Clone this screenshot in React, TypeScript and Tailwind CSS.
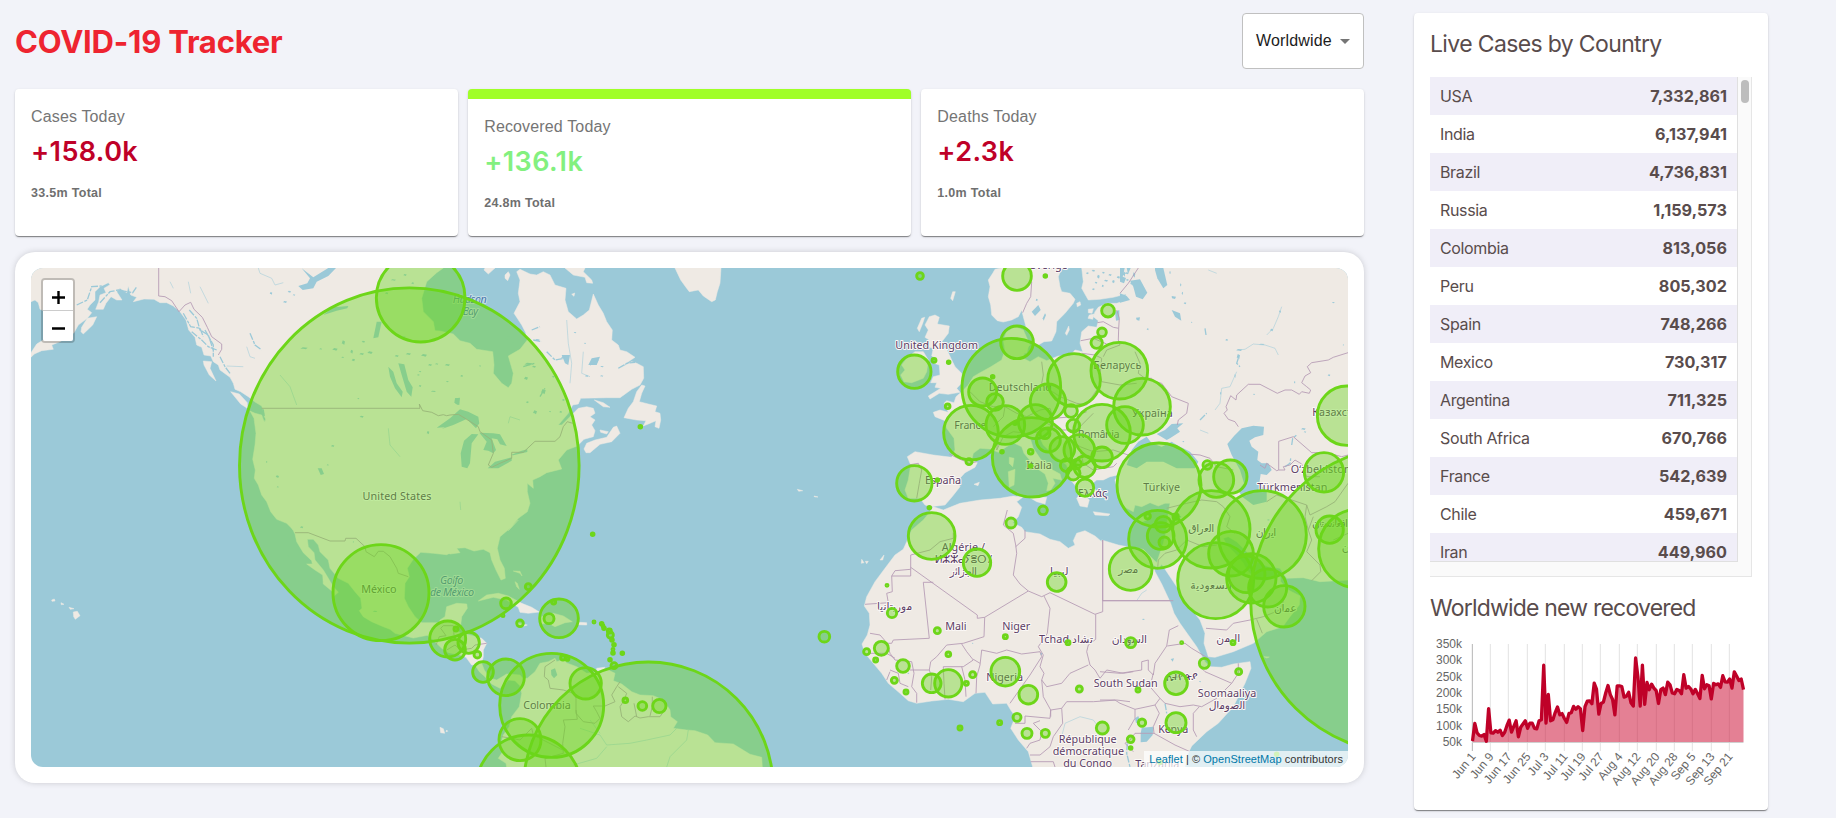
import React from "react";

const countries: [string, string][] = [
  ["USA", "7,332,861"],
  ["India", "6,137,941"],
  ["Brazil", "4,736,831"],
  ["Russia", "1,159,573"],
  ["Colombia", "813,056"],
  ["Peru", "805,302"],
  ["Spain", "748,266"],
  ["Mexico", "730,317"],
  ["Argentina", "711,325"],
  ["South Africa", "670,766"],
  ["France", "542,639"],
  ["Chile", "459,671"],
  ["Iran", "449,960"],
];

/* The map is described in tiles: each has an origin, and local units of a third of a pixel. */
type Tile = [number, number];
const ALASKA: Tile = [0, 250];
const PACIFIC: Tile = [0, 520];
const LABRADOR: Tile = [440, 250];
const CARIBBEAN: Tile = [440, 520];
const EUROPE: Tile = [880, 250];
const STEPPE: Tile = [1120, 250];
const SAHARA: Tile = [840, 510];
const ARABIA: Tile = [1100, 510];

type Part = [Tile, string];
const pts = (...parts: Part[]) =>
  parts
    .map(([[ox, oy], s]) =>
      s
        .trim()
        .split(/\s+/)
        .map((p) => {
          const [x, y] = p.split(",").map(Number);
          return (ox + x / 3).toFixed(1) + "," + (oy + y / 3).toFixed(1);
        })
        .join(" "),
    )
    .join(" ");

const land: string[] = [
  pts(
    [ALASKA, "93,54 93,155 105,150 115,158 120,178 150,190 160,230 130,270 110,282 93,308 93,322 103,312 125,302 160,298 155,285 180,275 222,248 235,225 262,205 275,188 262,178 270,165 285,150 285,125 300,110 325,98 330,104 312,115 318,128 300,135 296,155 287,178 310,178 318,160 333,140 350,150 366,150 350,125 360,115 380,128 385,108 392,135 410,142 400,155 432,147 462,148 480,158 500,158 520,168 540,185 558,210 566,240 585,262 590,285 605,292 612,315 632,318 640,335 655,345 660,360 690,382 700,400 705,418 722,425 745,440 765,456 785,468 793,490 793,517 785,495 765,490 750,483 762,505 768,550 765,585 758,628 766,660 763,685 775,705 785,735 800,755 812,785 830,808 860,820 880,840"],
    [PACIFIC, "875,22 885,42 890,65 910,98 935,122 937,132 920,132 945,150 968,165 970,192 998,215 1002,228 1015,217 1000,200 985,175 970,150 945,120 942,98 925,80 922,58 940,58 955,75 960,95 985,120 990,145 1015,175 1045,190 1065,215 1082,235 1086,265 1078,272 1090,290 1115,305 1150,320 1170,328 1185,340 1240,354 1282,346 1300,360 1325,385 1345,398 1365,402"],
    [CARIBBEAN, "60,405 78,412 95,435 105,435 118,455 135,470 155,492 165,497 180,505 195,492 205,480 225,482 240,497 245,520 238,560 215,590 208,620 190,645 180,680 188,695 175,715 198,730 200,741 967,741 965,712 930,703 880,672 825,668 803,645 765,632 740,630 700,625 712,605 692,590 690,570 670,540 640,527 600,525 575,515 545,492 520,482 525,460 500,448 480,455 440,460 410,440 378,428 380,415 350,425 345,415 325,425 300,430 285,455 262,475 248,475 240,465 200,462 170,480 150,475 133,450 125,430 130,410 130,390 140,370 125,355 90,345 62,340 48,328 62,315 65,290 82,265 80,252 50,250 20,260 15,290 0,300"],
    [PACIFIC, "1318,308 1265,308 1245,290 1225,260 1213,235 1215,190 1228,170 1222,145 1240,118 1262,97 1300,100 1340,104 1358,95"],
    [CARIBBEAN, "20,95 30,102 60,98 50,85 75,83 102,93 130,88 150,98 155,120 168,150 183,180 196,175 193,145 180,120 172,85 180,50 210,25 235,0"],
    [LABRADOR, "205,842 235,805 262,785 270,760 262,725 262,700 280,715 278,690 300,680 320,668 365,657 355,630 380,600 412,588 432,568 460,560 465,542 455,525 465,510 450,500 465,490 460,475 440,470 415,475 395,495 365,525 355,525 385,490 398,465 415,462 422,445 500,443 540,443 575,418 600,405 611,385 610,350 590,340 575,335 535,357 565,335 585,322 560,305 540,300 535,285 515,270 517,240 500,215 490,190 475,165 460,132 448,180 430,195 410,207 385,185 375,150 378,115 345,105 330,75 310,65 290,75 270,72 240,58 230,65 240,90 235,130 240,155 222,190 245,225 257,248 262,270 240,298 205,318 220,370 215,400 205,413 185,400 160,370 162,345 158,305 110,298 90,280 60,272 40,252 0,243"],
    [ALASKA, "1305,242 1300,215 1270,185 1265,145 1280,95 1310,68 1330,54"],
  ),
  pts([LABRADOR, "552,503 565,475 580,455 590,425 605,405 615,408 605,430 598,455 625,462 650,468 645,485 660,490 662,510 657,535 645,530 648,512 625,522 610,528 618,512 590,510"]),
  pts([LABRADOR, "432,597 440,580 465,570 500,562 520,532 530,528 540,550 515,575 480,583 450,608 438,608"]),
  pts([LABRADOR, "480,540 505,545 500,552 482,547"]),
  pts([LABRADOR, "463,450 490,458 510,472 490,470"]),
  pts([LABRADOR, "705,54 715,75 722,90 735,108 748,125 775,120 790,138 815,155 826,150 832,125 840,100 843,54"]),
  pts([LABRADOR, "375,54 400,75 435,82 440,98 458,100 455,90 430,65 435,54"]),
  pts([LABRADOR, "132,60 145,72 165,54 135,54"]),
  pts([LABRADOR, "195,75 205,65 210,75 203,92 195,85"]),
  pts([LABRADOR, "395,133 404,129 402,139"]),
  pts([ALASKA, "692,425 718,432 742,458 742,475 722,462"]),
  pts([ALASKA, "610,333 635,335 630,355 648,393 628,375 612,345"]),
  pts([ALASKA, "245,232 262,205 290,200 278,225 250,252 243,245"]),
  pts([CARIBBEAN, "115,243 140,225 175,220 205,228 245,250 275,262 298,276 265,280 240,277 235,262 200,240 160,232"]),
  pts([CARIBBEAN, "305,290 340,280 370,288 397,305 375,308 345,320 325,310 300,312"]),
  pts([CARIBBEAN, "416,307 440,308 440,315 416,314"]),
  pts([CARIBBEAN, "228,308 262,315 245,320 228,315"]),
  pts([CARIBBEAN, "470,445 495,442 490,450 470,452"]),
  pts([CARIBBEAN, "225,185 232,190 238,208 230,200"]),
  pts([CARIBBEAN, "220,153 240,154 246,168 240,160"]),
  pts([PACIFIC, "220,276 232,274 240,287 226,298 221,290"]),
  pts([PACIFIC, "155,240 163,237 165,243 156,244"]),
  pts([PACIFIC, "183,248 192,253 184,254"]),
  pts([PACIFIC, "207,262 222,266 211,268"]),
  pts([PACIFIC, "1320,622 1330,626 1334,640 1322,638"]),
  pts([PACIFIC, "1340,630 1343,634 1338,635"]),
  /* British Isles */
  pts([EUROPE, "148,200 165,195 178,202 172,222 208,228 205,250 182,280 180,290 200,298 215,330 225,350 245,370 246,398 230,415 240,427 205,433 178,430 150,447 145,438 182,415 165,412 170,398 152,398 160,380 180,375 178,345 162,340 168,325 155,318 160,295 142,290 148,270 135,262 145,240 135,225"]),
  pts([EUROPE, "80,325 105,305 130,305 145,330 140,365 130,385 95,398 72,395 62,375 75,360 65,345"]),
  pts([EUROPE, "112,235 125,205 134,202 128,220 118,245"]),
  pts([EUROPE, "212,145 218,125 226,125 218,152"]),
  /* Scandinavia */
  pts([EUROPE, "365,54 345,58 338,70 325,90 330,110 325,140 332,165 335,195 352,212 370,216 395,210 415,200 425,180 430,200 438,230 455,262 460,282 475,285 492,275 515,273 528,245 530,215 555,190 580,160 585,148 570,130 545,125 540,110 535,80 545,54"]),
  /* Europe, Asia and Africa in one coastline */
  pts(
    [EUROPE, "605,54 610,95 605,115 625,150 660,148 700,142 738,132 735,152 710,160 680,160 655,172 645,185 640,200 655,212 650,232 625,228 605,245 600,280 608,305 585,300 570,318 535,318 500,332 475,320 450,335 430,325 435,300 450,285 430,240 405,230 380,245 370,270 375,300 365,330 330,352 300,368 280,380 265,405 245,425 228,440 222,458 200,452 192,460 205,487 180,480 160,487 165,500 195,512 200,535 222,565 225,600 215,622 160,615 105,605 82,620 92,645 85,690 75,720 85,745 120,745 135,765 152,770 195,765 215,742 240,710 235,690 255,668 285,652 292,638 275,630 280,610 300,595 330,597 355,607 380,590 400,578 425,590 432,610 470,655 495,672 505,700 500,722 512,720 525,700 518,685 545,690 540,672 500,650 480,625 460,595 452,570 475,553 490,585 525,618 560,645 572,690 590,712 598,735 590,745 600,768 622,772 628,750 615,735 645,735 655,728 632,705 650,690 670,690 690,680 715,675 705,690 712,720 720,755 735,772 760,785"],
    [STEPPE, "45,765 65,770 90,758 115,768 135,760 150,760 145,790 140,830"],
    [ARABIA, "200,60 190,100 170,158 130,118 90,112 55,105 5,90"],
    [SAHARA, "785,95 765,78 735,62 710,70 700,92 705,105 685,115 660,95 630,88 600,72 555,65 545,52 518,38 535,20 545,-8 530,-25 548,-38 520,-42 480,-35 420,-30 360,-20 310,0 280,-10 268,8 250,30 215,60 200,95 190,118 165,135 135,175 105,215 80,260 73,288 88,310 90,345 82,375 66,402 75,430 100,460 125,490 145,520 180,550 205,572 230,580 275,573 325,568 370,575 405,550 435,547 458,582 500,580 512,600 526,620 512,655 535,690 565,725 578,771"],
    [ARABIA, "255,771 262,735 275,708 320,665 355,640 400,590 435,520 453,475 450,455 400,462 365,472 330,470 315,455 290,410 265,375 240,340 222,310 212,280 185,222 165,185 158,162 175,178 185,163 200,185 230,230 262,282 300,330 315,370 312,400 325,440 345,442 400,425 460,400 500,365 548,350 570,320 598,285 600,258 565,240 542,215 540,195 520,200 495,215 475,205 455,195 440,180 430,160 405,130 380,105 370,85 385,80 410,95 440,125 470,155 505,170 540,175 560,205 610,203 660,215 744,210"],
    [STEPPE, "684,54"],
  ),
  pts([EUROPE, "388,622 402,625 398,650 388,640"]),
  pts([EUROPE, "385,665 405,658 402,705 388,712"]),
  pts([EUROPE, "445,740 500,742 495,762 470,755"]),
  pts([EUROPE, "640,785 690,792 685,797 645,795"]),
  pts([EUROPE, "282,703 298,697 294,707"]),
  pts([EUROPE, "425,295 445,290 440,310 425,308"]),
  pts([EUROPE, "590,160 600,155 602,165 592,170"]),
  pts([EUROPE, "625,178 640,176 636,190 625,188"]),
  pts([EUROPE, "628,195 642,192 638,208 624,205"]),
  pts([EUROPE, "556,250 566,228 568,240 560,256"]),
  pts([ARABIA, "110,25 150,15 140,30 120,38"]),
  pts([CARIBBEAN, "1265,118 1272,128 1264,130"]),
  pts([CARIBBEAN, "1276,124 1285,124 1280,131"]),
  pts([CARIBBEAN, "1320,120 1332,105 1328,120"]),
  pts([ARABIA, "492,440 508,441 500,444"]),
  pts([LABRADOR, "1072,718 1088,722 1076,724"]),
  pts([LABRADOR, "1122,738 1134,741 1124,741"]),
];

const water: string[] = [
  pts([ALASKA, "895,108 922,100 930,85 905,55 940,82 985,54 1008,54 985,78 950,95 940,115 908,120"]),
  pts([ALASKA, "970,195 1000,172 1045,168 1042,175 1010,182"]),
  pts([ALASKA, "1195,340 1213,343 1225,390 1238,412 1234,440 1220,425 1205,375"]),
  pts([ALASKA, "1165,350 1180,365 1190,400 1208,425 1205,442 1185,415 1170,380"]),
  pts([ALASKA, "1130,215 1145,215 1135,262 1120,265"]),
  pts([ALASKA, "953,655 965,655 972,672 962,675"]),
  pts([ALASKA, "1365,445 1378,445 1375,465 1363,458"]),
  pts([ALASKA, "1310,533 1350,505 1375,498"], [LABRADOR, "30,505 60,478 85,485 115,500 118,520 108,535 80,507 40,525 5,537"], [ALASKA, "1335,532"]),
  pts([LABRADOR, "95,552 115,553 95,580 90,640 82,655 65,650 62,610 72,572"]),
  pts([LABRADOR, "118,548 160,550 180,553 200,588 180,583 172,568 155,565 168,600 160,610 145,602 130,600 140,575"]),
  pts([LABRADOR, "143,655 165,635 215,622 215,632 175,655"]),
  pts([LABRADOR, "212,615 245,602 262,598 262,606 220,616"]),
  pts([LABRADOR, "445,345 455,325 480,320 470,345"]),
  pts([LABRADOR, "365,315 390,315 385,345 375,340"]),
  pts([LABRADOR, "45,445 60,443 58,465 47,462"]),
  pts([CARIBBEAN, "333,450 345,445 352,465 342,475 334,465"]),
  pts([EUROPE, "455,185 475,165 482,180 465,198"]),
  pts([EUROPE, "488,205 495,190 498,195 491,212"]),
  /* Black Sea and Azov */
  pts([EUROPE, "740,645 755,600 775,575 800,560 815,580 845,590 875,575 890,585 930,605 955,635 945,655 890,655 850,635 800,635 770,655"]),
  pts([STEPPE, "110,552 135,540 155,522 190,520 172,535 180,545 150,565 140,570"]),
  pts([STEPPE, "342,558 365,535 400,527 432,530 430,555 405,562 388,572 395,590 415,605 412,630 425,640 445,640 455,660 440,675 422,672 418,700 440,725 440,755 400,765 368,742 355,722 372,700 360,660 335,615 322,582"]),
  pts([STEPPE, "30,92 60,88 82,128 68,148 48,140 40,110"]),
  pts([STEPPE, "105,60 112,85 130,115 142,105 130,54 105,54"]),
  pts([STEPPE, "155,180 180,190 184,212 165,200"]),
  pts([STEPPE, "0,54 14,54 8,80 18,84 12,100 0,95"]),
  pts([STEPPE, "20,54 32,54 24,72"]),
  pts([STEPPE, "0,130 20,138 30,150 0,158"]),
  pts([STEPPE, "155,138 168,140 165,147 156,145"]),
  pts([STEPPE, "48,203 60,202 58,212 50,210"]),
  pts([ARABIA, "125,653 160,650 158,675 140,695 122,697 122,670"]),
  pts([ARABIA, "105,625 115,618 120,632 108,640"]),
  pts([ARABIA, "212,447 222,445 218,455"]),
  pts([EUROPE, "705,185 718,180 718,210 708,212"]),
];

/* Small lakes: tile, then x, y, half width, half height */
const lakes: [Tile, number[][]][] = [
  [ALASKA, [
    [813, 130, 4, 4], [855, 156, 6, 3], [868, 125, 5, 3], [882, 135, 4, 2], [912, 295, 11, 3], [962, 297, 4, 2],
    [1005, 298, 8, 4], [1030, 278, 5, 7], [1055, 305, 4, 6], [1060, 330, 5, 4], [1085, 312, 7, 3], [1110, 308, 8, 4],
    [1090, 275, 5, 3], [1028, 322, 4, 2], [1210, 262, 7, 3], [1225, 312, 8, 3], [1272, 316, 9, 4], [1190, 318, 6, 3],
    [1290, 345, 6, 3], [1310, 342, 5, 2], [1260, 365, 4, 2], [1255, 375, 4, 2], [1075, 446, 3, 2], [1300, 424, 8, 2],
    [1260, 408, 4, 3], [1342, 395, 4, 2], [1085, 500, 6, 3], [1284, 548, 4, 5], [998, 588, 5, 3], [983, 645, 3, 2],
    [832, 680, 5, 4], [833, 711, 3, 2], [800, 636, 2, 3], [1180, 90, 8, 2], [1215, 75, 5, 3], [1238, 100, 4, 3],
    [1160, 130, 5, 3],
  ]],
  [PACIFIC, [[905, 22, 5, 3], [1125, 274, 7, 2], [865, 108, 2, 2], [1060, 66, 2, 2]]],
  [LABRADOR, [
    [205, 265, 9, 7], [215, 280, 5, 5], [265, 342, 12, 4], [282, 350, 6, 3], [258, 385, 6, 5], [310, 425, 7, 8],
    [285, 487, 6, 6], [262, 457, 4, 3], [330, 485, 3, 2], [362, 486, 4, 3], [370, 450, 4, 3], [340, 380, 4, 3],
    [22, 345, 8, 3], [65, 378, 4, 3], [120, 348, 3, 2], [292, 270, 7, 3], [372, 322, 9, 4], [463, 338, 10, 6],
    [440, 378, 5, 3], [485, 378, 5, 2], [486, 350, 5, 2], [405, 248, 4, 2], [435, 280, 3, 2],
  ]],
  [STEPPE, [
    [150, 68, 2, 5], [182, 105, 2, 5], [187, 130, 2, 5], [195, 160, 4, 3], [83, 238, 3, 3], [215, 217, 2, 2],
    [320, 270, 4, 3], [355, 320, 5, 8], [358, 300, 9, 3], [402, 433, 3, 2], [627, 376, 4, 3], [670, 285, 2, 2],
    [640, 158, 4, 2], [425, 283, 9, 2], [480, 185, 3, 4], [455, 240, 5, 4], [550, 537, 7, 3], [555, 546, 4, 2],
    [524, 397, 2, 4], [302, 430, 2, 5], [345, 378, 2, 6], [190, 575, 3, 2], [12, 72, 4, 8], [22, 90, 4, 3],
  ]],
  [EUROPE, [
    [622, 70, 4, 3], [640, 62, 5, 3], [655, 80, 4, 6], [670, 68, 4, 3], [690, 75, 5, 3], [678, 92, 6, 3],
    [648, 98, 4, 3], [700, 95, 4, 5], [640, 118, 4, 3], [668, 108, 3, 4], [715, 82, 5, 4], [740, 70, 6, 3],
    [755, 100, 4, 6], [470, 150, 3, 4], [380, 110, 2, 3], [762, 75, 4, 8],
  ]],
  [SAHARA, [[604, 432, 3, 4], [398, 400, 2, 2], [205, 490, 3, 2]]],
  [ARABIA, [[130, 328, 4, 2], [300, 515, 3, 2], [240, 20, 4, 3], [505, 30, 4, 2]]],
];

const rivers: string[] = [
  pts([ALASKA, "230,165 262,150 275,110 305,108"]),
  pts([ALASKA, "300,158 330,125 355,120 398,128 410,110"]),
  pts([ALASKA, "568,180 590,205 600,240 625,255 640,300"]),
  pts([ALASKA, "550,190 572,230 600,235 610,260"]),
  pts([ALASKA, "615,240 640,285 640,320"]),
  pts([ALASKA, "575,245 605,270 625,290 650,300"]),
  pts([ALASKA, "660,320 675,350 690,370"]),
  pts([ALASKA, "750,250 765,285 785,300"]),
  pts([ALASKA, "755,460 790,480 795,515"]),
  pts([LABRADOR, "320,305 345,330 375,325"]),
  pts([LABRADOR, "535,355 560,340 585,337"]),
  pts([LABRADOR, "450,345 475,330"]),
  pts([LABRADOR, "275,240 300,230"]),
  pts([LABRADOR, "280,270 305,275"]),
  pts([LABRADOR, "300,440 315,415"]),
  pts([LABRADOR, "250,350 285,340"]),
  pts([STEPPE, "355,325 350,340 360,350"]),
  pts([STEPPE, "240,510 260,490"]),
  pts([STEPPE, "515,585 518,565 530,555"]),
  pts([STEPPE, "255,235 258,255"]),
  pts([STEPPE, "495,650 510,640 512,625"]),
  pts([ARABIA, "195,580 200,610"]),
  pts([ARABIA, "82,700 80,730 90,771"]),
];

const streams: string[] = [
  pts([ALASKA, "775,54 780,70 815,85 825,105 850,98"]),
  pts([ALASKA, "1165,535 1170,585 1200,620"]),
  pts([ALASKA, "840,375 870,410 890,465"]),
  pts([ALASKA, "510,95 520,115"]),
  pts([ALASKA, "565,95 572,130"]),
  pts([ALASKA, "600,110 625,160"]),
  pts([ALASKA, "680,348 730,350"]),
  pts([ALASKA, "740,290 750,320 765,325"]),
  pts([LABRADOR, "380,210 385,280 395,340 390,400"]),
  pts([LABRADOR, "430,305 425,370 450,380"]),
  pts([LABRADOR, "205,520 210,500 240,510"]),
  pts([LABRADOR, "60,755 62,780"]),
  pts([CARIBBEAN, "420,625 480,645 500,675 570,670 620,660 690,645 710,625"]),
  pts([CARIBBEAN, "400,735 470,715 500,680"]),
  pts([CARIBBEAN, "680,741 690,710 740,660 745,630"]),
  pts([CARIBBEAN, "450,600 480,640"]),
  pts([STEPPE, "485,170 475,200 460,235 440,255"]),
  pts([STEPPE, "475,315 465,295 435,285 400,282 375,298 350,300"]),
  pts([STEPPE, "350,365 330,410 305,415 300,460 285,480"]),
  pts([STEPPE, "265,60 290,70"]),
  pts([STEPPE, "240,540 265,550"]),
  pts([ARABIA, "110,272 125,250 140,240"]),
  pts([SAHARA, "665,680 675,640 720,620 760,630 775,650"]),
];

const borders: string[] = [
  pts([ALASKA, "476,54 476,138 495,140 515,152 537,185 555,165 572,157 582,178 607,202 622,232 635,260 665,282 665,298 655,315"]),
  pts([ALASKA, "785,475 1260,475 1258,462 1268,482 1295,487 1315,497"], [LABRADOR, "10,494 20,497 30,495 55,493 75,505 115,530 120,545 155,570 160,610 145,645 155,652 180,640 215,625 215,607 250,607 285,574 345,574 360,560 370,530 382,515 398,520"]),
  pts([PACIFIC, "885,38 925,38 990,63 1035,63 1037,55 1068,55 1095,80 1098,95 1123,110 1135,94 1150,94 1170,110 1190,145 1195,160 1225,170"]),
  pts([PACIFIC, "1308,375 1318,350 1338,347 1322,325 1330,317 1360,317 1362,345"]),
  pts([CARIBBEAN, "20,390 45,375 62,390 95,385 105,375 140,370"]),
  pts([CARIBBEAN, "345,420 315,440 313,470 325,480 330,505 370,510 400,520 408,535 408,580 430,605 465,610 480,595 470,575 460,558 495,558 525,545 515,525 530,500 540,485"]),
  pts([CARIBBEAN, "535,500 560,520 550,545 540,560 545,590 565,605 585,588 600,594 625,590 660,590 670,575"]),
  pts([CARIBBEAN, "582,550 590,590"]),
  pts([CARIBBEAN, "637,530 637,560 630,588"]),
  pts([CARIBBEAN, "408,570 412,598 370,600 375,620 368,670 370,700 315,715 318,741"]),
  pts([CARIBBEAN, "185,650 215,655 240,660 275,625 280,645 368,690"]),
  /* Europe */
  pts([EUROPE, "455,95 452,140 440,160 428,188"]),
  pts([EUROPE, "775,54 745,100 720,130"]),
  pts([EUROPE, "652,218 670,215 700,232 716,235 718,205 710,180"]),
  pts([EUROPE, "716,235 715,270 720,285 680,300 670,320"]),
  pts([EUROPE, "602,272 640,265 680,282"]),
  pts([EUROPE, "605,310 645,315 665,325 660,370 665,395"]),
  pts([EUROPE, "485,335 490,375 485,400 510,420"]),
  pts([EUROPE, "665,395 720,405 770,400"]),
  pts([EUROPE, "510,420 540,440 590,460 620,465 650,420"]),
  pts([EUROPE, "270,425 300,455 340,470 375,470"]),
  pts([EUROPE, "340,530 370,500 375,470 410,490 440,500 480,480 510,475"]),
  pts([EUROPE, "355,560 350,600 370,560 400,545 440,550 480,545"]),
  pts([EUROPE, "510,475 520,505 580,500 620,485"]),
  pts([EUROPE, "500,520 540,540 590,540 640,490"]),
  pts([EUROPE, "560,560 600,590 640,605 700,600 745,615"]),
  pts([EUROPE, "600,600 610,640 640,660 700,650 710,640"]),
  pts([EUROPE, "208,612 240,628 270,640 290,635"]),
  pts([EUROPE, "115,640 125,660 118,700 110,745"]),
  pts([EUROPE, "85,645 115,640"]),
  pts([STEPPE, "45,305 60,340 55,370 75,385 95,385 105,395 125,400 155,440 180,450 205,460 200,490 175,510 172,525"]),
  pts([STEPPE, "684,308 640,322 625,330 575,338 562,350 572,368 555,378 545,398 560,410 572,420 568,430 545,425 538,433 515,420 495,420 472,430 420,403 385,403 350,435 348,450 332,437 318,470 322,480 312,490 325,508 345,515 355,530"]),
  pts([STEPPE, "476,574 476,660 495,660 490,650 510,645 525,630 545,642 560,680 600,680"]),
  pts([STEPPE, "476,574 520,560 575,608 620,608 665,620 684,615"]),
  pts([STEPPE, "420,645 435,655 440,640 470,662 476,660"]),
  pts([STEPPE, "440,755 470,735 500,745 560,765 570,795 620,770 645,755 684,700"]),
  pts([STEPPE, "560,765 555,800 565,840"]),
  pts([STEPPE, "205,612 240,615 270,625 290,650 340,660"]),
  pts([STEPPE, "140,775 200,760 245,750 290,755 310,770 330,800 320,830 345,850"]),
  /* Africa */
  pts([SAHARA, "340,68 340,85 300,95 270,120 212,135 212,198 155,198 157,245 140,250 145,278 75,283"]),
  pts([SAHARA, "155,198 165,182 212,178"]),
  pts([SAHARA, "212,172 412,315 412,325 434,322 565,243"]),
  pts([SAHARA, "280,217 250,217 268,385 160,390 155,400 142,400 120,375 90,370"]),
  pts([SAHARA, "434,322 432,380 370,400 320,405 290,440 272,455 268,480"]),
  pts([SAHARA, "502,0 490,45 520,70 527,105 530,130 520,195 540,222 565,243 605,260 630,248 765,313 788,305 788,90"]),
  pts([SAHARA, "788,272 1000,272"]),
  pts([SAHARA, "555,60 555,85 527,110"]),
  pts([SAHARA, "767,313 767,388 745,405 740,425 750,465 765,480 780,505 800,480 850,490 880,485"]),
  pts([SAHARA, "612,258 630,295 622,370 595,410 610,435 600,470 612,490 605,510 620,530 665,520 690,490 745,465"]),
  pts([SAHARA, "425,420 470,430 500,420 545,432 600,425 605,440"]),
  pts([SAHARA, "425,420 420,465 410,500 408,550"]),
  pts([SAHARA, "605,440 570,495 545,530 510,580"]),
  pts([SAHARA, "365,402 380,425 400,450 370,470 310,470 312,520 315,568"]),
  pts([SAHARA, "400,448 420,460"]),
  pts([SAHARA, "365,470 375,510 378,560"]),
  pts([SAHARA, "210,480 268,480 275,500 272,540"]),
  pts([SAHARA, "142,400 150,430 165,450 215,455 222,490 215,530 230,550 230,578"]),
  pts([SAHARA, "85,430 140,430 165,445"]),
  pts([SAHARA, "150,480 175,490 180,520 205,530"]),
  pts([SAHARA, "140,510 150,485"]),
  pts([SAHARA, "605,510 610,560 632,600 630,625 555,618 555,640 525,640"]),
  pts([SAHARA, "632,620 632,600 665,595 680,575 760,575 830,570 870,575"]),
  pts([SAHARA, "665,595 668,640 640,680 630,710 600,735 570,735"]),
  pts([SAHARA, "600,632 580,640 605,665 600,690 570,700 560,715"]),
  pts([SAHARA, "572,755 640,755 645,771"]),
  pts([ARABIA, "8,90 8,272 210,272"]),
  pts([ARABIA, "235,347 208,360 200,408 165,460 160,495 145,480 145,450 125,455 125,480 60,490 0,485"]),
  pts([ARABIA, "202,408 255,400 275,415 300,430 325,445"]),
  pts([ARABIA, "160,490 150,530 180,565 195,580 240,590 280,585 305,590 350,565 395,520 315,485 300,470"]),
  pts([ARABIA, "0,570 45,570 60,580 105,598 165,585 180,565"]),
  pts([ARABIA, "165,585 178,610 160,650 162,670 105,670 90,690 75,700 100,725"]),
  pts([ARABIA, "162,670 225,705 270,725"]),
  pts([ARABIA, "298,590 280,610 280,660 290,680"]),
  pts([ARABIA, "105,598 105,625 85,660"]),
  pts([ARABIA, "415,460 415,490 395,520"]),
  pts([ARABIA, "318,355 380,360 400,340 450,330 490,320 540,300 555,260"]),
  pts([ARABIA, "470,328 487,370"]),
  pts([ARABIA, "173,175 175,150 195,130 230,120 260,90 310,110 350,105"]),
  pts([ARABIA, "620,125 635,90 625,60 640,20"]),
  pts([ARABIA, "620,125 660,165 662,185 635,212"]),
  pts([ARABIA, "700,90 744,70"]),
];

type Dot = [number, number, number];
const dots: [Tile, Dot[]][] = [
  [ALASKA, [[1262, 143, 133]]],
  [PACIFIC, [[1143, 218, 144], [1343, 357, 54]]],
  [LABRADOR, [[601, 530, 4]]],
  [CARIBBEAN, [
    [335, 556, 156], [625, 800, 374], [266, 801, 156], [240, 659, 63], [45, 389, 31], [86, 368, 32], [48, 327, 6],
    [112, 404, 10], [129, 456, 31], [198, 472, 55], [437, 490, 47], [522, 437, 9], [556, 541, 7], [607, 558, 13],
    [658, 558, 20], [327, 296, 15], [357, 295, 58], [341, 246, 6], [198, 250, 16], [265, 200, 9], [189, 287, 3],
    [240, 310, 10], [458, 43, 4], [462, 306, 3], [485, 311, 4], [489, 318, 3], [492, 325, 4], [508, 333, 6],
    [511, 345, 9], [516, 360, 4], [522, 374, 4], [519, 388, 3], [519, 399, 4], [547, 400, 4], [510, 419, 4],
    [369, 413, 7], [382, 416, 5], [1153, 350, 16],
  ]],
  [SAHARA, [
    [275, 78, 70], [411, 158, 41], [513, 39, 15], [650, 216, 28], [156, 309, 14], [141, 226, 3], [292, 362, 9],
    [124, 415, 21], [80, 425, 9], [107, 450, 6], [189, 468, 19], [163, 511, 9], [198, 546, 6], [275, 520, 28],
    [325, 520, 41], [379, 520, 6], [398, 494, 9], [325, 433, 7], [496, 485, 43], [496, 380, 6], [565, 554, 28],
    [684, 398, 6], [718, 537, 9], [787, 654, 18], [531, 622, 12], [561, 670, 15], [616, 670, 12], [479, 638, 6],
    [360, 654, 6],
  ]],
  [ARABIA, [
    [92, 177, 64], [92, 398, 15], [245, 398, 3], [313, 460, 15], [416, 485, 9], [228, 520, 34], [228, 638, 30],
    [114, 540, 6], [126, 638, 11], [92, 688, 10], [92, 714, 4], [399, 398, 6], [180, 757, 4], [530, 733, 4],
    [173, 88, 87], [182, 78, 40], [193, 97, 16], [190, 43, 24], [143, 19, 8], [227, 20, 8], [347, 212, 114],
    [334, 58, 116], [487, 74, 132], [393, 131, 67], [454, 205, 74], [440, 193, 55], [503, 234, 57], [553, 289, 62],
    [774, 116, 118], [689, 59, 41], [913, 269, 461],
  ]],
  [STEPPE, [[331, 680, 50], [289, 690, 52], [262, 645, 13], [117, 705, 126], [681, 497, 89], [612, 667, 59], [66, 470, 85]]],
  [EUROPE, [
    [735, 525, 55], [718, 362, 85], [684, 182, 19], [666, 247, 13], [650, 278, 17], [582, 390, 79], [394, 413, 148],
    [411, 277, 49], [411, 78, 43], [496, 78, 4], [338, 380, 4], [308, 426, 42], [345, 456, 25], [273, 548, 82],
    [366, 605, 4], [376, 525, 58], [405, 520, 4], [466, 515, 51], [504, 455, 53], [573, 483, 19], [580, 527, 19],
    [456, 622, 119], [452, 605, 7], [452, 648, 4], [495, 551, 15], [505, 570, 36], [547, 597, 37], [598, 600, 46],
    [666, 548, 85], [666, 622, 31], [560, 646, 19], [580, 670, 20], [614, 650, 32], [590, 642, 14], [615, 713, 26],
    [103, 700, 53], [172, 690, 4], [148, 773, 4], [267, 635, 9], [103, 365, 50], [162, 331, 6], [206, 337, 4],
    [203, 469, 7], [120, 78, 10], [489, 781, 13],
  ]],
];

/* tile, centre x, baseline y, text, drawn width */
const labels: [Tile, number, number, string, number][] = [
  [ALASKA, 1191, 749, "United States", 207],
  [PACIFIC, 1137, 218, "México", 106],
  [CARIBBEAN, 321, 566, "Colombia", 143],
  [EUROPE, 170, 297, "United Kingdom", 248],
  [EUROPE, 507, 58, "Sverige", 112],
  [EUROPE, 421, 424, "Deutschland", 190],
  [EUROPE, 271, 536, "France", 96],
  [EUROPE, 477, 657, "Italia", 77],
  [EUROPE, 189, 701, "España", 108],
  [EUROPE, 638, 740, "Ελλάς", 88],
  [EUROPE, 656, 563, "România", 126],
  [EUROPE, 712, 356, "Беларусь", 144],
  [STEPPE, 97, 501, "Україна", 122],
  [STEPPE, 656, 497, "Казахстан", 158],
  [STEPPE, 602, 668, "Oʻzbekiston", 180],
  [STEPPE, 517, 722, "Türkmenistan", 210],
  [STEPPE, 125, 722, "Türkiye", 111],
  [SAHARA, 370, 124, "Algérie /", 130],
  [SAHARA, 370, 160, "ⵍⵣⵣⴰⵢⴻⵔ /", 172],
  [SAHARA, 370, 196, "الجزائر", 82],
  [SAHARA, 658, 194, "ليبيا", 56],
  [SAHARA, 164, 299, "موريتانيا", 106],
  [SAHARA, 348, 360, "Mali", 64],
  [SAHARA, 529, 361, "Niger", 84],
  [SAHARA, 678, 398, "Tchad تشاد", 162],
  [SAHARA, 494, 514, "Nigeria", 110],
  [SAHARA, 743, 699, "République", 174],
  [SAHARA, 745, 735, "démocratique", 214],
  [SAHARA, 743, 770, "du Congo", 146],
  [ARABIA, 77, 532, "South Sudan", 192],
  [ARABIA, 88, 399, "السودان", 106],
  [ARABIA, 85, 188, "مصر", 60],
  [ARABIA, 304, 66, "العراق", 78],
  [ARABIA, 498, 78, "ایران", 62],
  [ARABIA, 333, 238, "السعودية", 124],
  [ARABIA, 385, 397, "اليمن", 72],
  [ARABIA, 556, 305, "عمان", 68],
  [ARABIA, 690, 52, "افغانستان", 108],
  [ARABIA, 760, 122, "پاکستان", 70],
  [ARABIA, 245, 511, "ኢትዮጵያ", 96],
  [ARABIA, 381, 560, "Soomaaliya", 176],
  [ARABIA, 381, 597, "الصومال", 110],
  [ARABIA, 220, 668, "Kenya", 90],
  [ARABIA, 172, 775, "Tanzania", 132],
];
const seaLabels: [Tile, number, number, string, number][] = [
  [LABRADOR, 89, 159, "Hudson", 102],
  [LABRADOR, 91, 196, "Bay", 46],
  [CARIBBEAN, 35, 191, "Golfo", 70],
  [CARIBBEAN, 36, 227, "de México", 132],
];

function WorldMap() {
  return (
    <svg viewBox="31 268 1317 499" className="block h-full w-full" fontFamily="'Noto Sans','Open Sans','DejaVu Sans',sans-serif">
      <rect x="31" y="268" width="1317" height="499" fill="#9bc9d8" />
      {land.map((p, i) => (
        <polygon key={i} points={p} fill="#efeae4" stroke="#efeae4" strokeWidth=".5" strokeLinejoin="round" />
      ))}
      {water.map((p, i) => (
        <polygon key={i} points={p} fill="#9bc9d8" />
      ))}
      {lakes.flatMap(([[ox, oy], list], k) =>
        list.map(([x, y, a, b], i) => (
          <polygon
            key={k + "-" + i}
            fill="#9bc9d8"
            points={pts([[ox, oy], `${x - a},${y + b / 3} ${x - a / 3},${y - b} ${x + a},${y - b / 2} ${x + a / 2},${y + b} ${x - a / 4},${y + b / 2}`])}
          />
        )),
      )}
      {rivers.map((p, i) => (
        <polyline key={i} points={p} fill="none" stroke="#9bc9d8" strokeWidth="1.3" strokeDasharray="7 1.5 3 1" />
      ))}
      {streams.map((p, i) => (
        <polyline key={i} points={p} fill="none" stroke="#aacfdb" strokeWidth=".8" opacity=".8" />
      ))}
      {borders.map((p, i) => (
        <polyline key={i} points={p} fill="none" stroke="#b79db5" strokeWidth=".9" strokeLinejoin="round" />
      ))}
      {[...labels, ...seaLabels].map(([[ox, oy], x, y, t, w], i) => {
        const sea = i >= labels.length;
        return (
          <text
            key={i}
            x={ox + x / 3}
            y={oy + y / 3}
            textLength={w / 3}
            lengthAdjust="spacing"
            textAnchor="middle"
            fontSize="10.8"
            fontStyle={sea ? "italic" : "normal"}
            fill={sea ? "#4878ac" : "#5c3e66"}
            stroke={sea ? "#c5dde6" : "#fbf8f6"}
            strokeWidth="2"
            strokeLinejoin="round"
            paintOrder="stroke"
          >
            {t}
          </text>
        );
      })}
      <g fill="#6ad81c" fillOpacity=".4" stroke="#6dd619" strokeWidth="2.9">
        <ellipse cx="409.3" cy="465.5" rx="169.8" ry="177.6" />
        {dots.flatMap(([[ox, oy], list], k) =>
          list.map(([x, y, r], i) => <circle key={k + "-" + i} cx={ox + x / 3} cy={oy + y / 3} r={r / 3} />),
        )}
      </g>
    </svg>
  );
}

/* New recoveries per day, in thousands, from Jun 1 */
const series = [
  53, 107, 78, 70, 68, 73, 52, 152, 78, 77, 85, 80, 86, 70, 80, 100, 117, 80, 98, 115, 66, 95, 105, 115, 92, 108, 108,
  92, 90, 115, 118, 285, 108, 196, 115, 118, 140, 157, 133, 137, 122, 110, 138, 140, 159, 150, 158, 152, 85, 158, 175,
  176, 167, 230, 212, 135, 168, 172, 200, 223, 195, 180, 133, 222, 222, 220, 187, 190, 202, 170, 160, 307, 250, 160, 285,
  165, 232, 210, 227, 215, 207, 168, 210, 215, 195, 233, 225, 200, 198, 211, 208, 198, 256, 215, 220, 213, 198, 211, 198,
  183, 254, 213, 225, 222, 182, 229, 225, 228, 217, 253, 234, 233, 243, 215, 265, 252, 238, 243, 210,
];
const ticks: [string, number][] = [
  ["Jun 1", 217], ["Jun 9", 271], ["Jun 17", 325], ["Jun 25", 382], ["Jul 3", 436], ["Jul 11", 493], ["Jul 19", 547],
  ["Jul 27", 601], ["Aug 4", 658], ["Aug 12", 712], ["Aug 20", 769], ["Aug 28", 823], ["Sep 5", 877], ["Sep 13", 934],
  ["Sep 21", 988],
];

function LineChart() {
  const line = series
    .map((v, i) => (1472.5 + (i * 271) / (series.length - 1)).toFixed(1) + "," + (742 - ((v - 50) * 98) / 300).toFixed(1))
    .join(" ");
  return (
    <svg viewBox="1430 630 321 160" className="block h-[160px] w-[321px]" fontFamily="'Liberation Sans',Arial,sans-serif" fontSize="12" fill="#666">
      {ticks.map(([t, x], i) => (
        <g key={t}>
          <line x1={1400 + x / 3} x2={1400 + x / 3} y1="644" y2="751" stroke={i ? "#e2e2e2" : "#b5b5b5"} strokeWidth="1" />
          <text textAnchor="end" transform={`translate(${1404 + x / 3} 757) rotate(-50)`}>
            {t}
          </text>
        </g>
      ))}
      <line x1="1472" x2="1743.500" y1="742.5" y2="742.5" stroke="#d0d0d0" />
      {["350k", "300k", "250k", "200k", "150k", "100k", "50k"].map((t, i) => (
        <text key={t} x="1462" y={648 + i * 16.33} textAnchor="end">
          {t}
        </text>
      ))}
      <polygon points={`1472.5,742 ${line} 1743.5,742`} fill="#cc1034" fillOpacity=".53" />
      <polyline points={line} fill="none" stroke="#bf0128" strokeWidth="3.3" strokeLinejoin="round" strokeLinecap="butt" />
    </svg>
  );
}

const cardShadow =
  "rounded bg-white shadow-[0px_2px_1px_-1px_rgba(0,0,0,0.28),0px_1px_1px_0px_rgba(0,0,0,0.2),0px_1px_3px_0px_rgba(0,0,0,0.12)]";

function InfoBox({ title, cases, total, active, green }: { title: string; cases: string; total: string; active?: boolean; green?: boolean }) {
  return (
    <div className={`${cardShadow} h-[147px] flex-1 overflow-hidden px-4 ${active ? "border-t-[10px] border-[#a0ff28]" : ""}`}>
      <p className="mt-4 text-[16px] leading-6 tracking-[0.15px] text-[#757575]">{title}</p>
      <h2 className={`mt-[6px] font-[Inter] text-[27px] leading-[34px] font-semibold tracking-[0.4px] ${green ? "text-[#83f07f]" : "text-[#bf0128]"}`}>
        {cases}
      </h2>
      <p className="mt-[15px] text-[12.500px] leading-[18px] font-bold tracking-[0.3px] text-[#6f6f6f]">{total}</p>
    </div>
  );
}

export default function App() {
  return (
    <div className="flex h-[818px] w-full overflow-hidden bg-[#f2f3f9] pt-[13px] pl-[15px] font-['Liberation_Sans',Arial,sans-serif]">
      <main className="w-[1349px] shrink-0">
        <header className="flex h-14 items-center justify-between">
          <h1 className="pt-[2px] font-[Inter] text-[31px] font-bold tracking-[-0.22px] text-[#ee2430]">COVID-19 Tracker</h1>
          <div className="flex h-14 w-[122px] items-center justify-between rounded border border-[#c0c0c0] bg-white pr-[13px] pb-[1px] pl-[13px]">
            <span className="text-[16px] tracking-[0.15px] text-[#1c1c1c]">Worldwide</span>
            <svg width="10" height="5" viewBox="0 0 10 5" className="mt-[1px]">
              <path d="M0 0h10L5 5z" fill="#757575" />
            </svg>
          </div>
        </header>
        <section className="mt-5 flex gap-[10.500px]">
          <InfoBox title="Cases Today" cases="+158.0k" total="33.5m Total" />
          <InfoBox title="Recovered Today" cases="+136.1k" total="24.8m Total" active green />
          <InfoBox title="Deaths Today" cases="+2.3k" total="1.0m Total" />
        </section>
        <section className="mt-4 h-[531px] rounded-[20px] bg-white p-4 shadow-[0_0_7px_-1px_rgba(0,0,0,0.22)]">
          <div className="relative h-[499px] overflow-hidden rounded-xl">
            <WorldMap />
            <div className="absolute top-[10px] left-[10px] flex flex-col rounded border-2 border-black/20 bg-clip-padding font-bold text-black">
              <div className="flex h-[31px] w-[30px] items-center justify-center rounded-t-[2px] border-b border-[#ccc] bg-white">
                <svg width="13" height="13" viewBox="0 0 13 13" className="mt-[4px]">
                  <path d="M0 6.500h13M6.500 0v13" stroke="#000" strokeWidth="2.400" />
                </svg>
              </div>
              <div className="flex h-[30px] w-[30px] items-center justify-center rounded-b-[2px] bg-white">
                <svg width="13" height="13" viewBox="0 0 13 13" className="mt-[4px]">
                  <path d="M0 6.500h13" stroke="#000" strokeWidth="2.600" />
                </svg>
              </div>
            </div>
            <div className="absolute right-0 bottom-0 bg-white/70 px-[5px] text-[11px] leading-4 tracking-[0.06px] whitespace-nowrap text-[#333]">
              <span className="text-[#0078a8]">Leaflet</span> | © <span className="text-[#0078a8]">OpenStreetMap</span> contributors
            </div>
          </div>
        </section>
      </main>
      <aside className={`${cardShadow} ml-[50px] h-[797px] w-[354px] shrink-0 px-4 font-[Inter] text-[#594c4c]`}>
        <h3 className="pt-[15px] text-[23px] leading-8 tracking-[-0.64px]">Live Cases by Country</h3>
        <div className="mt-[17px] flex h-[500px] w-[322px] flex-col border-r border-b border-[#e6e6e6] bg-[#fafafa]">
          <div className="flex h-[485px]">
            <div className="h-[485px] w-[308px] overflow-hidden border-r border-b border-[#e0e0e0] bg-white">
              {countries.map(([name, n], i) => (
                <div key={name} className={`flex h-[38px] items-center justify-between px-[10px] text-[16px] ${i % 2 ? "bg-white" : "bg-[#f0eef8]"}`}>
                  <span className="tracking-[-0.35px]">{name}</span>
                  <strong className="text-[16.200px] font-bold tracking-[0.02px]">{n}</strong>
                </div>
              ))}
            </div>
            <div className="flex-1 pt-[3px] pl-[3px]">
              <div className="h-[23px] w-2 rounded-full bg-[#bdbdbd]" />
            </div>
          </div>
        </div>
        <h3 className="mt-[15px] text-[23px] leading-8 tracking-[-0.8px]">Worldwide new recovered</h3>
        <div className="mt-[6px]">
          <LineChart />
        </div>
      </aside>
    </div>
  );
}
